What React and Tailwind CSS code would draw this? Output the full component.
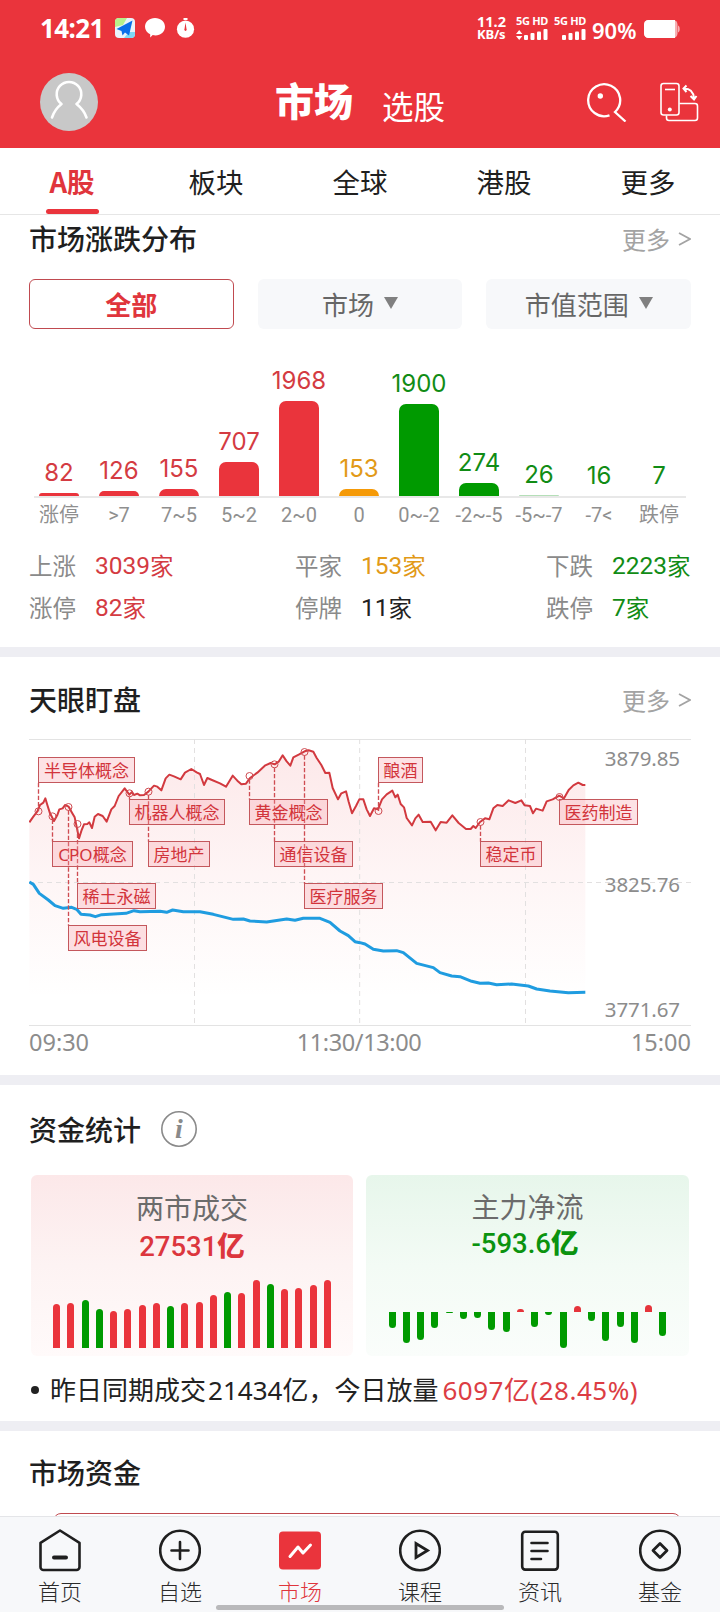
import React, { useState } from 'react';

const RED = 'bg-[#ea343c]';
const GREEN = 'bg-[#009a00]';

const tabs = ['A股', '板块', '全球', '港股', '更多'];

const distribution = [
  { range: '涨停', count: 82, height: 3, text: 'text-[#d43b42]', bar: RED },
  { range: '>7', count: 126, height: 5, text: 'text-[#d43b42]', bar: RED },
  { range: '7~5', count: 155, height: 7, text: 'text-[#d43b42]', bar: RED },
  { range: '5~2', count: 707, height: 34, text: 'text-[#d43b42]', bar: RED },
  { range: '2~0', count: 1968, height: 95, text: 'text-[#d43b42]', bar: RED },
  { range: '0', count: 153, height: 7, text: 'text-[#e29a18]', bar: 'bg-[#f59a08]' },
  { range: '0~-2', count: 1900, height: 92, text: 'text-[#118c15]', bar: GREEN },
  { range: '-2~-5', count: 274, height: 13, text: 'text-[#118c15]', bar: GREEN },
  { range: '-5~-7', count: 26, height: 1, text: 'text-[#118c15]', bar: 'bg-[#b5dfb8]' },
  { range: '-7<', count: 16, height: 0, text: 'text-[#118c15]', bar: GREEN },
  { range: '跌停', count: 7, height: 0, text: 'text-[#118c15]', bar: GREEN },
];

const stats = [
  [
    { label: '上涨', value: '3039', color: 'text-[#d43b42]' },
    { label: '平家', value: '153', color: 'text-[#e29a18]' },
    { label: '下跌', value: '2223', color: 'text-[#118c15]' },
  ],
  [
    { label: '涨停', value: '82', color: 'text-[#d43b42]' },
    { label: '停牌', value: '11', color: 'text-[#222]' },
    { label: '跌停', value: '7', color: 'text-[#118c15]' },
  ],
];

// chart space is 1986 x 861, three units to a pixel
const indexLine =
  '1,250 13,233 25,217 33,198 43,191 49,178 55,198 63,223 75,246 85,228 91,211 101,208 108,198 119,203 129,221 137,235 144,268 150,298 158,273 165,256 175,255 181,250 189,267 197,233 207,225 221,231 233,248 247,211 257,201 269,171 287,148 301,167 309,159 315,168 325,164 333,169 345,168 358,158 375,140 385,143 397,154 410,118 421,107 435,112 455,121 468,101 487,90 503,100 513,105 525,138 535,117 549,123 573,133 591,143 611,110 625,125 637,136 651,134 663,117 685,101 709,79 725,72 737,76 749,68 761,49 773,67 784,80 793,55 809,47 827,37 839,34 853,38 863,57 877,78 889,102 901,101 911,147 927,181 937,163 951,157 959,188 969,223 981,201 991,181 1003,181 1013,211 1023,231 1035,208 1047,211 1059,181 1073,166 1090,155 1099,175 1106,167 1115,195 1125,205 1133,237 1149,259 1159,238 1169,227 1181,249 1205,248 1220,274 1235,249 1253,251 1270,229 1289,252 1311,270 1325,270 1333,261 1340,267 1353,249 1368,238 1381,241 1393,208 1405,198 1421,201 1439,184 1459,192 1477,184 1487,199 1503,201 1512,223 1521,209 1541,215 1553,187 1571,181 1591,170 1605,178 1619,153 1633,139 1648,131 1661,138 1669,138';
const leadLine =
  '1,429 13,436 31,463 58,483 78,500 103,508 128,505 143,511 156,526 183,528 199,533 218,527 291,523 315,515 333,518 393,517 413,520 431,513 463,518 513,518 553,526 613,541 643,540 663,546 713,549 773,540 798,544 823,538 873,538 903,550 933,576 958,590 978,608 993,611 1008,615 1033,631 1063,636 1103,635 1123,641 1163,673 1213,686 1233,701 1268,711 1293,713 1328,727 1353,733 1378,732 1403,737 1448,735 1498,741 1523,750 1563,756 1618,761 1669,760';

// cy: height of the marker on the line, x/top: place of the tag in pixels
const concepts = [
  { name: '半导体概念', x: 9, top: 18, w: 97, cy: 217 },
  { name: 'CPO概念', x: 23, top: 102, w: 81, cy: 232 },
  { name: '风电设备', x: 39, top: 186, w: 79, cy: 204 },
  { name: '稀土永磁', x: 48, top: 144, w: 79, cy: 255 },
  { name: '机器人概念', x: 100, top: 60, w: 96, cy: 163 },
  { name: '房地产', x: 119, top: 102, w: 62, cy: 158 },
  { name: '黄金概念', x: 220, top: 60, w: 79, cy: 111 },
  { name: '通信设备', x: 245, top: 102, w: 79, cy: 76 },
  { name: '医疗服务', x: 275, top: 144, w: 79, cy: 39 },
  { name: '酿酒', x: 349, top: 18, w: 45, cy: 216 },
  { name: '稳定币', x: 451, top: 102, w: 62, cy: 249 },
  { name: '医药制造', x: 530, top: 60, w: 79, cy: 174 },
];

const turnover = [
  [44, 1], [45, 1], [48, 0], [39, 0], [37, 1], [39, 1], [43, 1], [45, 1], [42, 0], [45, 1],
  [46, 1], [53, 1], [56, 0], [55, 1], [68, 1], [64, 0], [59, 1], [60, 1], [63, 1], [68, 1],
];

const netFlow = [-16, -31, -28, -16, -1, -7, -6, -18, -20, 3, -15, -3, -36, 6, -9, -29, -15, -31, 7, -24];

const SectionTitle = ({ children }) => (
  <h2 className="text-[28px] leading-[38px] font-medium text-[#1f1f1f]">{children}</h2>
);

const More = () => (
  <span className="flex items-center gap-2 pt-px text-[24px] leading-[38px] text-[#a3a3a3]">
    更多
    <svg width="13" height="14" viewBox="0 0 13 14" fill="none" stroke="#a3a3a3" strokeWidth="1.8">
      <path d="M1 1l11 6-11 6" />
    </svg>
  </span>
);

const Divider = () => <div className="h-[10px] shrink-0 bg-[#eeeef3]" />;

const Signal = ({ arrows }) => (
  <div className="w-[32px]">
    <div className="font-[Noto_Sans] text-[11px] leading-[12px] font-bold tracking-[-0.3px] whitespace-nowrap">5G HD</div>
    <svg className="mt-[2px]" width="32" height="12" viewBox="0 0 32 12" fill="#fff">
      {arrows && <path d="M0 5L3.2 1 6.4 5zM0 7L3.2 11 6.4 7z" />}
      <rect x="8" y="6" width="4" height="5" rx="1" />
      <rect x="14.500" y="4" width="4" height="7" rx="1" />
      <rect x="21" y="2.500" width="4" height="8.500" rx="1" />
      <rect x="27.500" y="0" width="4" height="11" rx="1" />
    </svg>
  </div>
);

const StatusBar = () => (
  <div className="flex h-[56px] items-center pl-[40px] pr-[40px] text-white">
    <span className="w-[63px] font-[Noto_Sans] text-[26px] leading-[30px] font-bold tracking-[-0.6px]">14:21</span>
    <svg className="ml-[12px]" width="20" height="20" viewBox="0 0 20 20">
      <rect width="20" height="20" rx="4" fill="#e9f3fb" />
      <path d="M0 9V4a4 4 0 0 1 4-4h8L8 7z" fill="#b8f08a" />
      <path d="M9 20l5-6h6v2a4 4 0 0 1-4 4z" fill="#7fd8f5" />
      <path d="M17.500 2.500L1.500 11l5 2 1 4.500 2.500-3 4 3z" fill="#0a6fea" />
    </svg>
    <svg className="ml-[10px]" width="20" height="20" viewBox="0 0 20 20" fill="#fff">
      <path d="M10 0c5.600 0 10 3.800 10 8.700s-4.400 8.700-9.500 8.700c-1 0-2 0-2.800-.3L5.200 19.500v-3.300C2.200 14.700 0 12 0 8.700 0 3.800 4.400 0 10 0z" />
    </svg>
    <svg className="ml-[11px]" width="19" height="20" viewBox="0 0 19 20">
      <circle cx="9.500" cy="11.200" r="8.600" fill="#fff" />
      <path d="M7.500 1h4" stroke="#fff" strokeWidth="2" />
      <path d="M9.500 4.500l1 6.500a1.200 1.200 0 1 1-2 0z" fill="#ea343c" />
    </svg>

    <div className="ml-auto flex items-center">
      <div className="w-[30px] font-[Noto_Sans] text-[13px] leading-[13px] font-bold whitespace-nowrap">
        <div className="text-[14.500px]">11.2</div>
        <div className="tracking-[-0.2px]">KB/s</div>
      </div>
      <div className="ml-[9px]"><Signal arrows /></div>
      <div className="ml-[6px]"><Signal /></div>
      <span className="ml-[6px] w-[46px] pt-[4px] font-[Noto_Sans] text-[22px] leading-[24px] font-semibold">90%</span>
      <svg className="ml-[6px] mt-[2px]" width="36" height="18" viewBox="0 0 36 18">
        <rect width="33.500" height="18" rx="4.500" fill="#f6b1b4" />
        <path d="M4.500 0H31v18H4.500A4.500 4.500 0 0 1 0 13.500v-9A4.500 4.500 0 0 1 4.500 0z" fill="#fff" />
        <path d="M34 5.500c2.300.5 2.300 6.500 0 7z" fill="#f6b1b4" />
      </svg>
    </div>
  </div>
);

const Header = () => (
  <div className="relative flex h-[92px] items-center justify-between pl-[40px] pr-[21px] text-white">
    <svg width="58" height="58" viewBox="0 0 58 58" fill="none">
      <circle cx="29" cy="29" r="29" fill="#c8c8c8" />
      <path
        d="M12 44.500c2-6 5-10 9.500-13.500A12.300 12.300 0 1 1 36.500 31C41 34.500 44.500 38.500 46.500 44.500"
        stroke="#fff"
        strokeWidth="2.600"
        strokeLinecap="round"
        strokeLinejoin="round"
      />
    </svg>
    <div className="absolute left-[275px] top-[15px] flex items-center">
      <span className="text-[39px] leading-[54px] font-black">市场</span>
      <span className="ml-[29px] pt-[12px] text-[31.500px] leading-[44px]">选股</span>
    </div>
    <div className="flex items-center">
      <svg width="40" height="40" viewBox="0 0 40 40" fill="none" stroke="#fff" strokeWidth="2.300">
        <path d="M22.500 33.300A16 16 0 1 1 28 30L38.500 39.500" />
        <circle cx="13.300" cy="14" r="2.700" fill="#fff" stroke="none" />
      </svg>
      <svg className="ml-[32px]" width="40" height="40" viewBox="0 0 40 40" fill="none" stroke="#fff" strokeWidth="1.600">
        <rect x="2" y="1.500" width="18" height="31.500" rx="2.500" />
        <path d="M6 7.500h10" />
        <circle cx="10.800" cy="27.500" r="2" fill="#fff" stroke="none" />
        <path d="M20.500 21.500H36a2.500 2.500 0 0 1 2.500 2.500v12a2.500 2.500 0 0 1-2.500 2.500H10a2.500 2.500 0 0 1-2.500-2.500v-2.500" />
        <path d="M27.500 3.500L24.500 6.500l3 3.500M25 6.500c6 0 9.500 3 10 10M31.500 14l3.500 3.500 2.500-3.500" strokeWidth="2" />
      </svg>
    </div>
  </div>
);

const Filter = ({ label, active }) => (
  <button
    type="button"
    className={`flex h-[50px] items-center justify-center rounded-[6px] text-[26px] leading-[38px] ${
      active ? 'border border-[#c04a50] font-bold text-[#e0353c]' : 'bg-[#f7f8fa] text-[#666]'
    }`}
  >
    {label}
    {!active && (
      <svg className="ml-[10px] mb-[2px]" width="14" height="12" viewBox="0 0 14 12" fill="#808080">
        <path d="M0 0h14L7 12z" />
      </svg>
    )}
  </button>
);

const Distribution = () => (
  <section className="px-[29px]">
    <div className="mt-[4px] flex h-[38px] justify-between">
      <SectionTitle>市场涨跌分布</SectionTitle>
      <More />
    </div>
    <div className="mt-[22px] grid grid-cols-3 gap-[24px]">
      <Filter label="全部" active />
      <Filter label="市场" />
      <Filter label="市值范围" />
    </div>

    <div className="mt-[27px] flex h-[140px] w-[660px] items-end font-[Inter]">
      {distribution.map((d) => (
        <div key={d.range} className="flex w-[60px] flex-col items-center">
          <span className={`mb-[6px] text-[24px] leading-[28px] ${d.text}`}>{d.count}</span>
          <div className={`w-[40px] rounded-t-[7px] ${d.bar}`} style={{ height: d.height }} />
        </div>
      ))}
    </div>
    <div className="ml-[5px] h-[2px] w-[652px] bg-[#e8e8e8]" />
    <div className="mt-[4px] flex w-[660px] font-[Roboto,Noto_Sans_CJK_SC] text-[20px] leading-[26px] text-[#8f8f8f]">
      {distribution.map((d) => (
        <span key={d.range} className="w-[60px] text-center whitespace-nowrap">{d.range}</span>
      ))}
    </div>

    <div className="mt-[17px] mb-[19px] text-[23.500px] leading-[41.500px]">
      {stats.map((row) => (
        <div key={row[0].label} className="grid grid-cols-[266px_251px_145px]">
          {row.map((s) => (
            <div key={s.label} className="flex whitespace-nowrap">
              <span className="w-[66px] text-[#8a8a8a]">{s.label}</span>
              <span className={`flex ${s.color}`}>
                <span className="font-[Roboto] text-[24.500px]">{s.value}</span>
                <span>家</span>
              </span>
            </div>
          ))}
        </div>
      ))}
    </div>
  </section>
);

const WatchChart = () => (
  <div className="relative mt-[21px] h-[287px] w-[662px]">
    <svg width="662" height="287" viewBox="0 0 1986 861" fill="none">
      <defs>
        <linearGradient id="fade" x1="0" y1="0" x2="0" y2="1">
          <stop offset="0" stopColor="#ea343c" stopOpacity="0.11" />
          <stop offset="0.5" stopColor="#ea343c" stopOpacity="0.05" />
          <stop offset="1" stopColor="#ea343c" stopOpacity="0" />
        </linearGradient>
      </defs>
      <polygon points={`1,780 ${indexLine} 1669,780`} fill="url(#fade)" />
      <path d="M0 1.500H1986M0 859.500H1986" stroke="#e3e3e3" strokeWidth="3" />
      <path d="M496.500 0V860M992 0V860M1489.500 0V860M0 430.500H1986" stroke="#e2e0e0" strokeWidth="3" strokeDasharray="15 12" />
      <polyline points={leadLine} stroke="#1f9ce0" strokeWidth="9" strokeLinejoin="round" />
      <polyline points={indexLine} stroke="#d2393f" strokeWidth="6" strokeLinejoin="round" />
      {concepts.map((c) => (
        <g key={c.name} stroke="#cf4c52" strokeWidth="3">
          <circle cx={c.x * 3 + 1.5} cy={c.cy} r="10.500" />
          <path
            d={c.top < 50 ? `M${c.x * 3 + 1.5} ${c.top * 3 + 78}V${c.cy}` : `M${c.x * 3 + 1.5} ${c.cy + 10}V${c.top * 3 + 2}`}
            strokeWidth="4"
            strokeDasharray="13 6"
          />
        </g>
      ))}
    </svg>
    {concepts.map((c) => (
      <span
        key={c.name}
        className="absolute flex h-[26px] items-center justify-center border border-[#c4575c] bg-[#f9a0a8]/30 pt-px font-[Noto_Sans,Noto_Sans_CJK_SC] text-[17px] leading-[24px] whitespace-nowrap text-[#d2343b]"
        style={{ left: c.x, top: c.top, width: c.w }}
      >
        {c.name}
      </span>
    ))}
    <div className="absolute top-[6px] right-[11px] flex h-[277px] flex-col justify-between text-right font-[Noto_Sans] text-[20.500px] leading-[26px] tracking-[-0.1px] text-[#8c8c8c]">
      <span>3879.85</span>
      <span>3825.76</span>
      <span>3771.67</span>
    </div>
  </div>
);

const Watch = () => (
  <section className="px-[29px]">
    <div className="mt-[23px] flex h-[38px] justify-between">
      <SectionTitle>天眼盯盘</SectionTitle>
      <More />
    </div>
    <WatchChart />
    <div className="mb-[17px] flex justify-between font-[Noto_Sans] text-[23.500px] leading-[32px] text-[#8c8c8c]">
      <span>09:30</span>
      <span className="mr-[2px] tracking-[-0.4px]">11:30/13:00</span>
      <span>15:00</span>
    </div>
  </section>
);

const Funds = () => (
  <section className="px-[29px]">
    <div className="mt-[25px] flex items-center">
      <SectionTitle>资金统计</SectionTitle>
      <svg className="ml-[20px]" width="36" height="36" viewBox="0 0 36 36">
        <circle cx="18" cy="18" r="17.200" fill="none" stroke="#8a8a8a" strokeWidth="1.600" />
        <text x="18" y="26.500" textAnchor="middle" fontFamily="Liberation Serif" fontStyle="italic" fontWeight="bold" fontSize="28" fill="#8a8a8a">i</text>
      </svg>
    </div>
    <div className="mt-[27px] flex justify-between pl-[2px] pr-[2px]">
      <div className="flex h-[181px] w-[322px] flex-col items-center rounded-[6px] bg-linear-to-b from-[#fce8e9] via-[#fdf3f3] to-[#fffafa]">
        <span className="mt-[14px] text-[28px] leading-[36px] text-[#6b6b6b]">两市成交</span>
        <span className="mt-[2px] flex items-baseline text-[27.500px] leading-[34px] text-[#dc363d]">
          <span className="font-[Roboto] font-medium">27531</span>
          <span className="font-black">亿</span>
        </span>
        <div className="mt-auto mb-[8px] flex h-[70px] w-[278px] items-end justify-between">
          {turnover.map(([height, up], i) => (
            <div key={i} className={`w-[7px] rounded-t-[4px] ${up ? RED : GREEN}`} style={{ height }} />
          ))}
        </div>
      </div>
      <div className="flex h-[181px] w-[323px] flex-col items-center rounded-[6px] bg-linear-to-b from-[#e7f6eb] via-[#f3fbf5] to-[#fafdfb]">
        <span className="mt-[14px] text-[28px] leading-[35px] text-[#6b6b6b]">主力净流</span>
        <span className="mr-[5px] flex items-baseline text-[27.500px] leading-[34px] text-[#0b930f]">
          <span className="font-[Roboto] font-medium">-593.6</span>
          <span className="font-black">亿</span>
        </span>
        <div className="mt-auto mb-[8px] flex h-[43px] w-[278px] justify-between">
          {netFlow.map((v, i) => (
            <div key={i} className="flex w-[7px] flex-col">
              <div className="flex h-[7px] items-end">
                {v > 0 && <div className="w-[7px] rounded-t-[4px] bg-[#e5343b]" style={{ height: v }} />}
              </div>
              {v < 0 && <div className="w-[7px] rounded-b-[4px] bg-[#009a00]" style={{ height: -v }} />}
            </div>
          ))}
        </div>
      </div>
    </div>
    <div className="mt-[14px] mb-[11px] flex items-center font-[Noto_Sans,Noto_Sans_CJK_SC] text-[26px] leading-[40px] whitespace-nowrap text-[#222]">
      <i className="mr-[11px] ml-[2px] h-[8px] w-[8px] rounded-full bg-[#222]" />
      <span>昨日同期成交</span>
      <span className="ml-[2px]">21434亿，今日放量</span>
      <span className="ml-[4px] tracking-[0.5px] text-[#dc3d44]">6097亿(28.45%)</span>
    </div>
  </section>
);

const MarketFunds = () => (
  <section className="px-[29px]">
    <div className="mt-[22px]">
      <SectionTitle>市场资金</SectionTitle>
    </div>
    <div className="mt-[22px] mr-[10px] ml-[24px] h-[50px] rounded-[8px] border border-[#c04a50]" />
  </section>
);

const navItems = [
  {
    label: '首页',
    icon: (
      <>
        <path d="M1.500 14.800L21 2.500l19.500 12.300V39a3 3 0 0 1-3 3H4.500a3 3 0 0 1-3-3z" strokeLinejoin="round" />
        <path d="M15 29.500h12" strokeWidth="4" strokeLinecap="round" />
      </>
    ),
  },
  {
    label: '自选',
    icon: (
      <>
        <circle cx="21" cy="22.500" r="19.800" />
        <path d="M21 14v17M12.500 22.500h17" strokeWidth="2.600" strokeLinecap="round" />
      </>
    ),
  },
  {
    label: '市场',
    active: true,
    icon: (
      <>
        <rect x="0" y="3.500" width="42" height="38" rx="4" fill="#ea343c" stroke="none" />
        <path d="M11 28.500l8-9.500 5 6 7.500-8" stroke="#fff" strokeWidth="3" strokeLinecap="round" strokeLinejoin="round" />
      </>
    ),
  },
  {
    label: '课程',
    icon: (
      <>
        <circle cx="21" cy="22.500" r="19.800" />
        <path d="M17 15.500v14l11.500-7z" strokeWidth="2.800" />
      </>
    ),
  },
  {
    label: '资讯',
    icon: (
      <>
        <rect x="3.200" y="3.800" width="35.600" height="37.800" rx="3" />
        <path d="M12.500 15h16M12.500 23h16M12.500 31h9.500" strokeWidth="2.600" strokeLinecap="round" />
      </>
    ),
  },
  {
    label: '基金',
    icon: (
      <>
        <circle cx="21" cy="22.500" r="19.800" />
        <path d="M21 15.500l7 7-7 7-7-7z" strokeWidth="2.800" strokeLinejoin="round" />
      </>
    ),
  },
];

const BottomNav = () => (
  <nav className="relative h-[96px] shrink-0 border-t border-[#e4e5e8] bg-[#f7f8fa]">
    <div className="grid grid-cols-6">
      {navItems.map((item) => (
        <div key={item.label} className="flex flex-col items-center pt-[11px]">
          <svg width="42" height="44" viewBox="0 0 42 44" fill="none" stroke="#1f1f1f" strokeWidth="2.600">
            {item.icon}
          </svg>
          <span className={`mt-[3px] text-[22px] leading-[30px] font-light ${item.active ? 'text-[#e0353c]' : 'text-[#2a2a2a]'}`}>
            {item.label}
          </span>
        </div>
      ))}
    </div>
    <div className="absolute bottom-[2px] left-[216px] h-[5px] w-[288px] rounded-full bg-[#b9b9bb]" />
  </nav>
);

const App = () => {
  const [tab, setTab] = useState('A股');

  return (
    <div className="flex h-[1612px] w-[720px] flex-col overflow-hidden bg-white font-['Noto_Sans_CJK_SC',sans-serif]">
      <header className="shrink-0 bg-[#ea343c]">
        <StatusBar />
        <Header />
      </header>
      <div className="grid h-[67px] shrink-0 grid-cols-5 border-b border-[#e6e6e6]">
        {tabs.map((t) => (
          <button
            key={t}
            type="button"
            onClick={() => setTab(t)}
            className={`flex flex-col items-center pt-[12px] text-[27.500px] leading-[42px] ${
              t === tab ? 'font-bold text-[#e0353c]' : 'text-[#1f1f1f]'
            }`}
          >
            {t}
            {t === tab && <i className="mt-[7px] h-[5px] w-[53px] shrink-0 rounded-full bg-[#ea343c]" />}
          </button>
        ))}
      </div>
      <main className="min-h-0 flex-1 overflow-hidden">
        <Distribution />
        <Divider />
        <Watch />
        <Divider />
        <Funds />
        <Divider />
        <MarketFunds />
      </main>
      <BottomNav />
    </div>
  );
};

export default App;
